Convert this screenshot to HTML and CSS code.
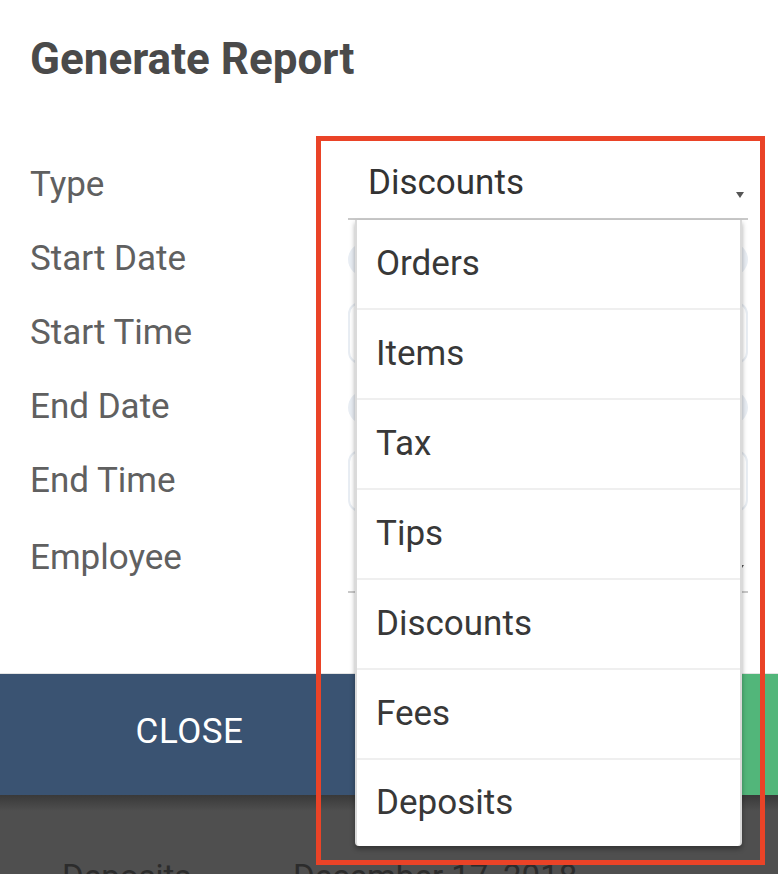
FILE: index.html
```html
<!DOCTYPE html>
<html lang="en">
<head>
<meta charset="utf-8">
<title>Generate Report</title>
<link rel="stylesheet" href="styles.css">
</head>
<body>
<div class="screen">
  <section class="modal">
    <h1 class="title">Generate Report</h1>
    <div class="form">
      <div class="label">Type</div>
      <div class="control">
        <div class="select">
          <span class="select-value">Discounts</span>
          <svg class="caret" width="8" height="6" viewBox="0 0 8 6"><polygon points="0,0 8,0 4,6" fill="#555"/></svg>
          <ul class="menu">
            <li class="menu-item">Orders</li>
            <li class="menu-item">Items</li>
            <li class="menu-item">Tax</li>
            <li class="menu-item">Tips</li>
            <li class="menu-item">Discounts</li>
            <li class="menu-item">Fees</li>
            <li class="menu-item">Deposits</li>
          </ul>
        </div>
      </div>

      <div class="label">Start Date</div>
      <div class="control"><div class="pill"></div></div>

      <div class="label">Start Time</div>
      <div class="control"><div class="boxed"></div></div>

      <div class="label">End Date</div>
      <div class="control"><div class="pill"></div></div>

      <div class="label">End Time</div>
      <div class="control"><div class="boxed"></div></div>

      <div class="label">Employee</div>
      <div class="control">
        <div class="select">
          <span class="select-value"></span>
          <svg class="caret" width="8" height="6" viewBox="0 0 8 6"><polygon points="0,0 8,0 4,6" fill="#555"/></svg>
        </div>
      </div>
    </div>

    <div class="footer">
      <button class="btn btn-close">CLOSE</button>
      <button class="btn btn-generate">GENERATE</button>
    </div>
  </section>

  <div class="backdrop">
    <div class="list-row">
      <span class="list-type">Deposits</span>
      <span class="list-date">December 17, 2018</span>
    </div>
  </div>

  <div class="highlight"></div>
</div>
</body>
</html>
```

FILE: styles.css
```css
html, body {
  margin: 0;
  padding: 0;
  overflow: hidden;
  background: #4f4f4f;
}

.screen {
  position: relative;
  width: 778px;
  height: 874px;
  font-family: Roboto, "Noto Sans", "Liberation Sans", sans-serif;
  overflow: hidden;
}

.modal {
  height: 795px;
  background: #ffffff;
  display: flex;
  flex-direction: column;
}

.title {
  margin: 33px 0 0 30px;
  font-size: 44px;
  line-height: 52px;
  font-weight: 700;
  color: #4a4a4a;
}

.form {
  margin-top: 63px;
  padding-left: 30px;
  display: grid;
  grid-template-columns: 318px 400px;
  grid-template-rows: repeat(5, 74px) 80px;
}

.label {
  display: flex;
  align-items: center;
  font-size: 35px;
  line-height: 40px;
  color: #606060;
}

.control {
  display: flex;
  align-items: center;
}

.select {
  position: relative;
  width: 100%;
  box-sizing: border-box;
  display: flex;
  min-height: 70px;
  padding: 13px 4px 15px 20px;
  border-bottom: 2px solid #c9c9c9;
}

.select-value {
  flex: 1;
  font-size: 35px;
  line-height: 40px;
  color: #333333;
}

.caret {
  align-self: flex-end;
  margin-bottom: 5px;
}

.pill {
  width: 100%;
  height: 33px;
  border-radius: 17px;
  background: #e9eef4;
}

.boxed {
  width: 100%;
  height: 62px;
  box-sizing: border-box;
  border: 2px solid #e8edf3;
  border-radius: 12px;
  background: #ffffff;
}

.menu {
  position: absolute;
  top: 100%;
  left: 7px;
  right: 6px;
  margin: 2px 0 0;
  padding: 0;
  list-style: none;
  background: #ffffff;
  border-left: 2px solid #dadada;
  border-right: 2px solid #dadada;
  border-radius: 0 0 4px 4px;
  box-shadow: 0 3px 5px rgba(0, 0, 0, 0.35);
  z-index: 5;
}

.menu-item {
  height: 88px;
  line-height: 88px;
  padding-left: 19px;
  font-size: 35px;
  color: #383838;
  border-bottom: 2px solid #efefef;
}

.menu-item:last-child {
  height: 86px;
  line-height: 86px;
  border-bottom: none;
}

.footer {
  margin-top: auto;
  display: flex;
  height: 122px;
  border-top: 1px solid #e4e4e4;
  box-sizing: border-box;
}

.btn {
  flex: 1;
  border: none;
  margin: 0;
  padding: 0 10px 6px 0;
  font-family: Roboto, "Noto Sans", "Liberation Sans", sans-serif;
  font-size: 35px;
  color: #ffffff;
  letter-spacing: 0.5px;
}

.btn-close {
  background: #3a5372;
}

.btn-generate {
  background: #52b67a;
}

.backdrop {
  height: 79px;
  background: linear-gradient(#393939, #4f4f4f 16px);
}

.list-row {
  display: flex;
  padding: 62px 0 0 62px;
  font-size: 33px;
  line-height: 40px;
  color: #2c2c2c;
}

.list-type {
  width: 231px;
}

.highlight {
  position: absolute;
  left: 316px;
  top: 136px;
  width: 449px;
  height: 729px;
  box-sizing: border-box;
  border: 5px solid #ea4327;
  z-index: 10;
  pointer-events: none;
}
```
